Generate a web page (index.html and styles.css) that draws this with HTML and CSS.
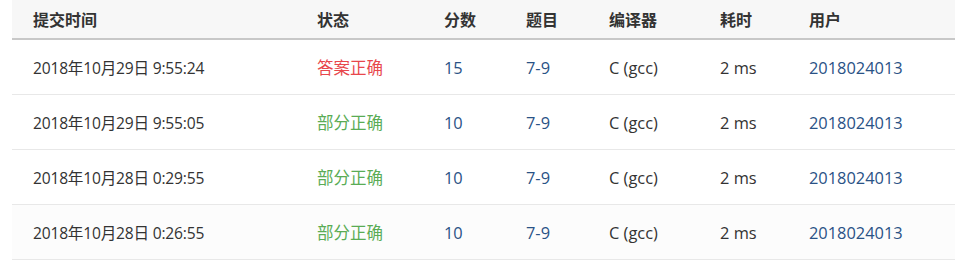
FILE: index.html
```html
<!DOCTYPE html>
<html lang="zh">
<head>
<meta charset="utf-8">
<title>提交列表</title>
<link rel="stylesheet" href="styles.css">
</head>
<body>
<div class="wrap">
<table class="subs">
  <colgroup>
    <col class="c-time"><col class="c-status"><col class="c-score"><col class="c-prob"><col class="c-comp"><col class="c-cost"><col class="c-user">
  </colgroup>
  <thead>
    <tr><th>提交时间</th><th>状态</th><th>分数</th><th>题目</th><th>编译器</th><th>耗时</th><th>用户</th></tr>
  </thead>
  <tbody>
    <tr><td class="time">2018年10月29日 9:55:24</td><td class="ac">答案正确</td><td class="link">15</td><td class="link">7-9</td><td>C (gcc)</td><td>2 ms</td><td class="link">2018024013</td></tr>
    <tr><td class="time">2018年10月29日 9:55:05</td><td class="pa">部分正确</td><td class="link">10</td><td class="link">7-9</td><td>C (gcc)</td><td>2 ms</td><td class="link">2018024013</td></tr>
    <tr><td class="time">2018年10月28日 0:29:55</td><td class="pa">部分正确</td><td class="link">10</td><td class="link">7-9</td><td>C (gcc)</td><td>2 ms</td><td class="link">2018024013</td></tr>
    <tr class="alt"><td class="time">2018年10月28日 0:26:55</td><td class="pa">部分正确</td><td class="link">10</td><td class="link">7-9</td><td>C (gcc)</td><td>2 ms</td><td class="link">2018024013</td></tr>
  </tbody>
</table>
</div>
</body>
</html>
```
FILE: styles.css
```css
html, body {
  margin: 0;
  padding: 0;
  background: #fff;
}
.wrap {
  padding: 0 16px 0 12px;
}
.subs {
  width: 943px;
  border-collapse: collapse;
  table-layout: fixed;
  font-family: "Open Sans", "Noto Sans CJK SC", sans-serif;
  font-size: 16.4px;
  color: #333;
}
.c-time { width: 284px; }
.c-status { width: 127px; }
.c-score { width: 82px; }
.c-prob { width: 83px; }
.c-comp { width: 111px; }
.c-cost { width: 89px; }
.c-user { width: 167px; }
.subs th {
  text-align: left;
  font-weight: bold;
  height: 38px;
  padding: 0 0 0 21px;
  background: #f7f7f7;
  border-bottom: 2px solid #c8c8c8;
  vertical-align: middle;
  font-family: "Noto Sans CJK SC", sans-serif;
  font-size: 16px;
  color: #333;
}
.subs td {
  height: 54px;
  padding: 0 0 0 21px;
  border-bottom: 1px solid #e8e8e8;
  vertical-align: middle;
  white-space: nowrap;
}
.subs tr.alt td {
  background: #fcfcfc;
}
.subs td.time { font-family: "Open Sans", "Noto Sans CJK SC", sans-serif; font-size: 15.6px; letter-spacing: -0.2px; }
.subs td.ac { color: #e8474c; font-family: "Noto Sans CJK SC", sans-serif; font-size: 16.5px; }
.subs td.pa { color: #5aac55; font-family: "Noto Sans CJK SC", sans-serif; font-size: 16.5px; }
.subs td.link { color: #2a5286; }
```
